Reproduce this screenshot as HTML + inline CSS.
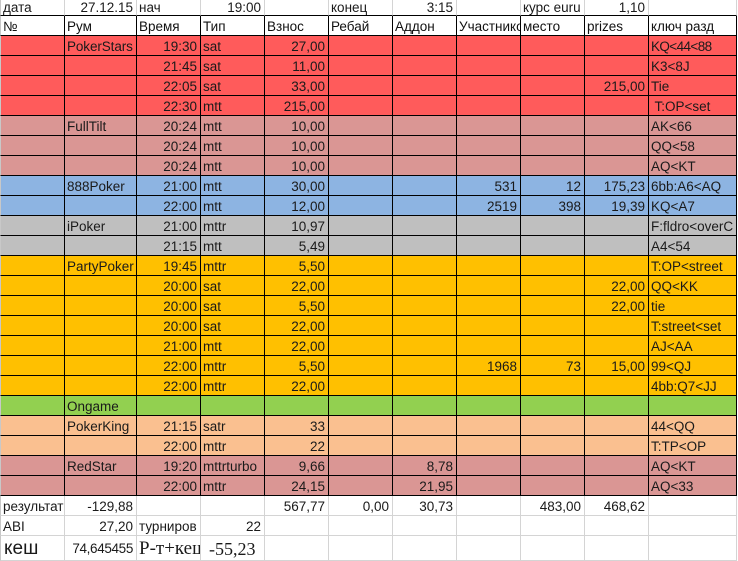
<!DOCTYPE html>
<html><head><meta charset="utf-8"><style>
html,body{margin:0;padding:0;background:#fff;width:738px;height:561px;overflow:hidden}
table{position:absolute;left:0;top:0;border-collapse:separate;border-spacing:0;table-layout:fixed;width:737px;font:13.5px "Liberation Sans","Noto Sans CJK SC",sans-serif;color:#1a1a1a}
td{box-sizing:border-box;border-right:1px solid #000;border-bottom:1px solid #000;height:20px;padding:2px 2px 0 2px;overflow:hidden;white-space:pre;line-height:17px;vertical-align:top}
td:first-child{border-left:1px solid #c8c8c8;padding-left:2px}
td.r{text-align:right;padding-right:3px}
tr.t td{height:16px;line-height:15px;padding-top:0;border-right-color:#d4d4d4}
tr.s td{border-color:#d4d4d4}
tr.s td:first-child{border-left-color:#c8c8c8}
tr.h td{color:#111}
tr.l td{height:25px;line-height:22px}
tr.a td{background:#ff5b5b}
tr.b td{background:#da9694}
tr.c td{background:#8db4e2}
tr.d td{background:#bfbfbf}
tr.e td{background:#ffc000}
tr.f td{background:#92d050}
tr.g td{background:#fac090}
.tm{font-family:"Liberation Serif",serif;font-size:18px}
.n{letter-spacing:-.6px}
</style></head><body>
<table>
<colgroup><col style="width:65px"><col style="width:72px"><col style="width:64px"><col style="width:64px"><col style="width:64px"><col style="width:64px"><col style="width:64px"><col style="width:64px"><col style="width:64px"><col style="width:64px"><col style="width:88px"></colgroup>
<tr class="t"><td>дата</td><td class="r">27.12.15</td><td>нач</td><td class="r">19:00</td><td></td><td>конец</td><td class="r">3:15</td><td></td><td>курс euru</td><td class="r">1,10</td><td></td></tr>
<tr class="h"><td>№</td><td>Рум</td><td>Время</td><td>Тип</td><td>Взнос</td><td>Ребай</td><td>Аддон</td><td>Участников</td><td>место</td><td>prizes</td><td>ключ разд</td></tr>
<tr class="a"><td></td><td style="letter-spacing:-.1px">PokerStars</td><td class="r">19:30</td><td>sat</td><td class="r">27,00</td><td></td><td></td><td></td><td></td><td></td><td class="n">KQ&lt;44&lt;88</td></tr>
<tr class="a"><td></td><td></td><td class="r">21:45</td><td>sat</td><td class="r">11,00</td><td></td><td></td><td></td><td></td><td></td><td>K3&lt;8J</td></tr>
<tr class="a"><td></td><td></td><td class="r">22:05</td><td>sat</td><td class="r">33,00</td><td></td><td></td><td></td><td></td><td class="r">215,00</td><td>Tie</td></tr>
<tr class="a"><td></td><td></td><td class="r">22:30</td><td>mtt</td><td class="r">215,00</td><td></td><td></td><td></td><td></td><td></td><td> T:OP&lt;set</td></tr>
<tr class="b"><td></td><td>FullTilt</td><td class="r">20:24</td><td>mtt</td><td class="r">10,00</td><td></td><td></td><td></td><td></td><td></td><td>AK&lt;66</td></tr>
<tr class="b"><td></td><td></td><td class="r">20:24</td><td>mtt</td><td class="r">10,00</td><td></td><td></td><td></td><td></td><td></td><td>QQ&lt;58</td></tr>
<tr class="b"><td></td><td></td><td class="r">20:24</td><td>mtt</td><td class="r">10,00</td><td></td><td></td><td></td><td></td><td></td><td>AQ&lt;KT</td></tr>
<tr class="c"><td></td><td>888Poker</td><td class="r">21:00</td><td>mtt</td><td class="r">30,00</td><td></td><td></td><td class="r">531</td><td class="r">12</td><td class="r">175,23</td><td>6bb:A6&lt;AQ</td></tr>
<tr class="c"><td></td><td></td><td class="r">22:00</td><td>mtt</td><td class="r">12,00</td><td></td><td></td><td class="r">2519</td><td class="r">398</td><td class="r">19,39</td><td>KQ&lt;A7</td></tr>
<tr class="d"><td></td><td>iPoker</td><td class="r">21:00</td><td>mttr</td><td class="r">10,97</td><td></td><td></td><td></td><td></td><td></td><td>F:fldro&lt;overC</td></tr>
<tr class="d"><td></td><td></td><td class="r">21:15</td><td>mtt</td><td class="r">5,49</td><td></td><td></td><td></td><td></td><td></td><td>A4&lt;54</td></tr>
<tr class="e"><td></td><td>PartyPoker</td><td class="r">19:45</td><td>mttr</td><td class="r">5,50</td><td></td><td></td><td></td><td></td><td></td><td>T:OP&lt;street</td></tr>
<tr class="e"><td></td><td></td><td class="r">20:00</td><td>sat</td><td class="r">22,00</td><td></td><td></td><td></td><td></td><td class="r">22,00</td><td>QQ&lt;KK</td></tr>
<tr class="e"><td></td><td></td><td class="r">20:00</td><td>sat</td><td class="r">5,50</td><td></td><td></td><td></td><td></td><td class="r">22,00</td><td>tie</td></tr>
<tr class="e"><td></td><td></td><td class="r">20:00</td><td>sat</td><td class="r">22,00</td><td></td><td></td><td></td><td></td><td></td><td>T:street&lt;set</td></tr>
<tr class="e"><td></td><td></td><td class="r">21:00</td><td>mtt</td><td class="r">22,00</td><td></td><td></td><td></td><td></td><td></td><td>AJ&lt;AA</td></tr>
<tr class="e"><td></td><td></td><td class="r">22:00</td><td>mttr</td><td class="r">5,50</td><td></td><td></td><td class="r">1968</td><td class="r">73</td><td class="r">15,00</td><td>99&lt;QJ</td></tr>
<tr class="e"><td></td><td></td><td class="r">22:00</td><td>mttr</td><td class="r">22,00</td><td></td><td></td><td></td><td></td><td></td><td>4bb:Q7&lt;JJ</td></tr>
<tr class="f"><td></td><td>Ongame</td><td></td><td></td><td></td><td></td><td></td><td></td><td></td><td></td><td></td></tr>
<tr class="g"><td></td><td>PokerKing</td><td class="r">21:15</td><td>satr</td><td class="r">33</td><td></td><td></td><td></td><td></td><td></td><td>44&lt;QQ</td></tr>
<tr class="g"><td></td><td></td><td class="r">22:00</td><td>mttr</td><td class="r">22</td><td></td><td></td><td></td><td></td><td></td><td>T:TP&lt;OP</td></tr>
<tr class="b"><td></td><td>RedStar</td><td class="r">19:20</td><td>mttrturbo</td><td class="r">9,66</td><td></td><td class="r">8,78</td><td></td><td></td><td></td><td>AQ&lt;KT</td></tr>
<tr class="b"><td></td><td></td><td class="r">22:00</td><td>mttr</td><td class="r">24,15</td><td></td><td class="r">21,95</td><td></td><td></td><td></td><td>AQ&lt;33</td></tr>
<tr class="s"><td>результат</td><td class="r">-129,88</td><td></td><td></td><td class="r">567,77</td><td class="r">0,00</td><td class="r">30,73</td><td></td><td class="r">483,00</td><td class="r">468,62</td><td></td></tr>
<tr class="s"><td>ABI</td><td class="r">27,20</td><td>турниров</td><td class="r">22</td><td></td><td></td><td></td><td></td><td></td><td></td><td></td></tr>
<tr class="s l"><td style="font-size:19px;padding-left:3px">кеш</td><td class="r" style="letter-spacing:-.35px">74,645455</td><td class="tm" style="font-size:19px">Р-т+кеш</td><td class="tm" style="padding-left:8px">-55,23</td><td></td><td></td><td></td><td></td><td></td><td></td><td></td></tr>
</table>
</body></html>
